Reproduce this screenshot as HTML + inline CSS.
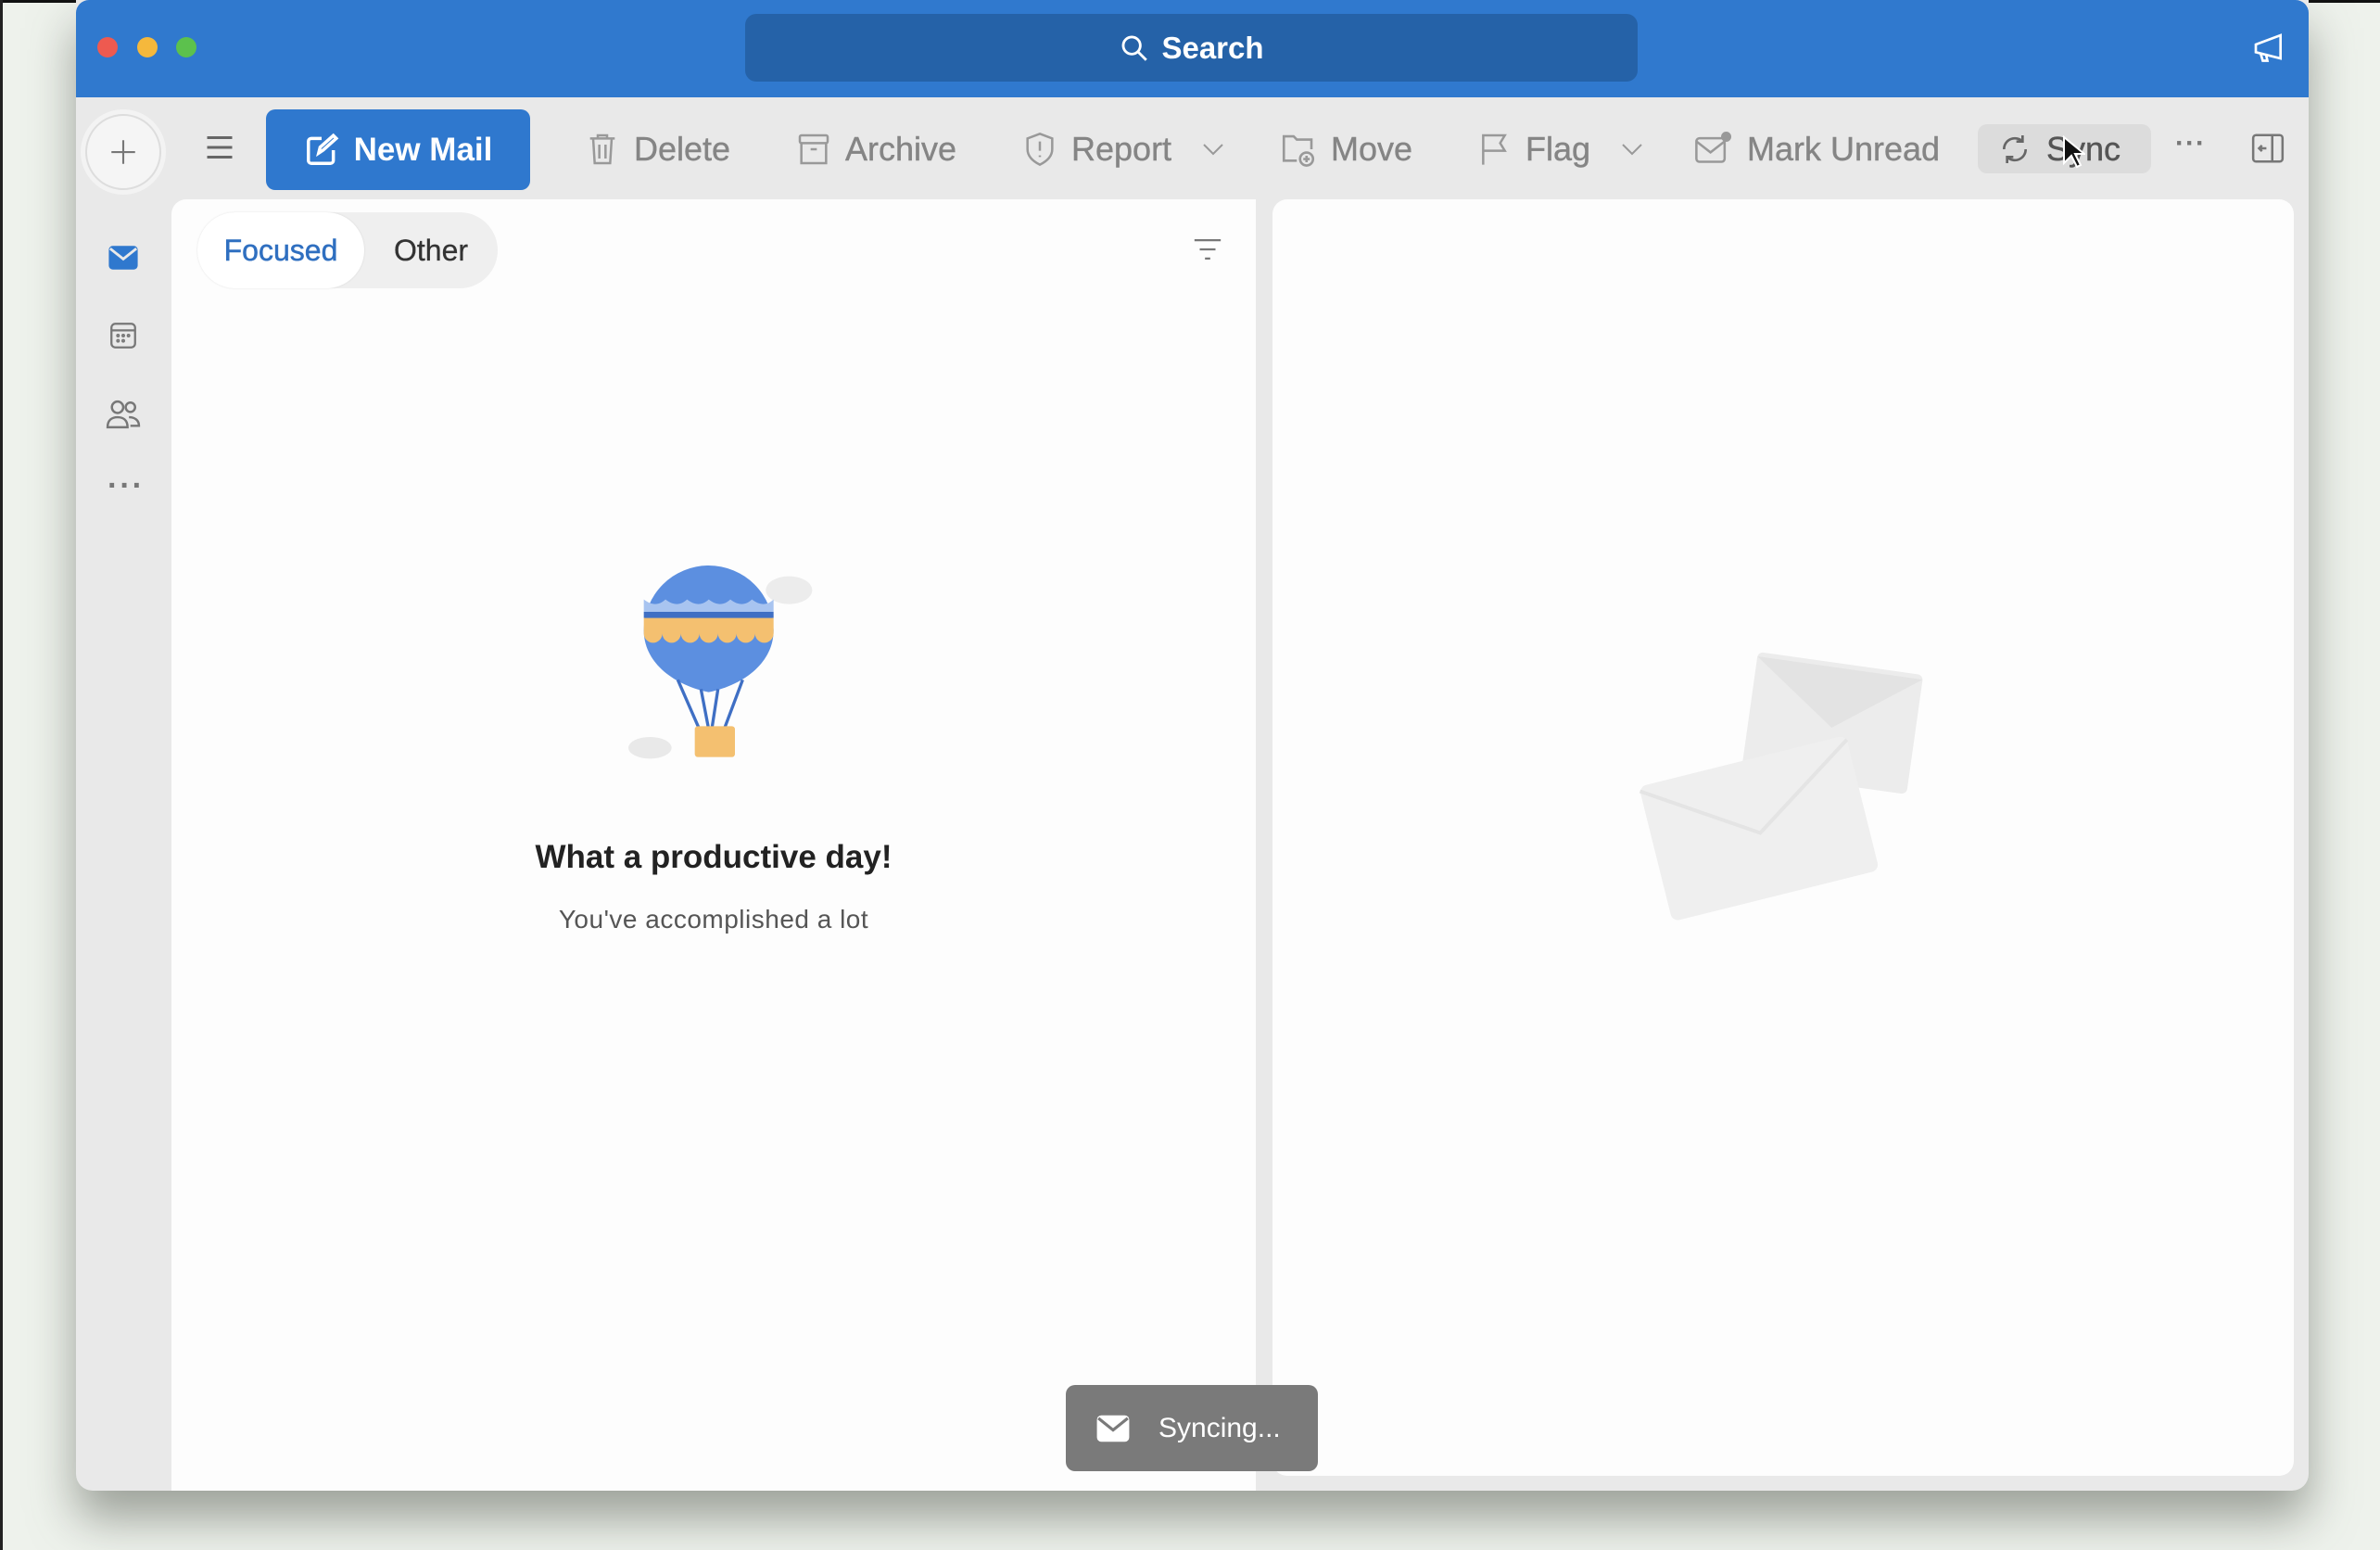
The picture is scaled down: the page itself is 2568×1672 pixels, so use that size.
<!DOCTYPE html>
<html><head><meta charset="utf-8"><style>
*{margin:0;padding:0;box-sizing:border-box}
body{width:2568px;height:1672px;background:#eef2ec;font-family:"Liberation Sans",sans-serif;position:relative;overflow:hidden}
.abs{position:absolute}
#win{left:82px;top:0;width:2409px;height:1608px;background:#e9e9e9;border-radius:0 0 18px 18px;box-shadow:0 30px 50px rgba(90,95,85,.55);overflow:hidden}
#title{left:0;top:0;width:2409px;height:105px;background:#3079ce;border-radius:14px 14px 0 0}
.tl{width:22px;height:22px;border-radius:50%;top:40px}
#search{left:722px;top:15px;width:963px;height:73px;background:#2562a8;border-radius:12px;color:#fff;font-size:33px;font-weight:bold;display:flex;align-items:center;justify-content:center;gap:12px}
.tb{color:#858585;font-size:36px;top:136px;height:50px;display:flex;align-items:center;-webkit-text-stroke:0.4px #858585}
.tb svg{margin-right:14px}
#new{left:205px;top:118px;width:285px;height:87px;background:#2f78ce;border-radius:10px;color:#fff;font-size:35px;font-weight:bold;display:flex;align-items:center;justify-content:center;gap:16px}
#list{left:103px;top:215px;width:1170px;height:1400px;background:#fdfdfd;border-radius:16px 0 0 0}
#read{left:1291px;top:215px;width:1102px;height:1377px;background:#fdfdfd;border-radius:16px}
#pill{left:131px;top:229px;width:324px;height:82px;background:#efefef;border-radius:41px}
#foc{left:131px;top:229px;width:180px;height:82px;background:#fff;border-radius:41px;box-shadow:0 0 2px rgba(0,0,0,.1);color:#2f6fc0;font-size:32px;display:flex;align-items:center;justify-content:center;-webkit-text-stroke:0.5px #2f6fc0}
#oth{left:311px;top:229px;width:144px;height:82px;color:#333;font-size:32px;display:flex;align-items:center;justify-content:center;-webkit-text-stroke:0.3px #333}
#toast{left:1068px;top:1494px;width:272px;height:93px;background:#7a7a7a;border-radius:10px;color:#fff;font-size:30px;display:flex;align-items:center;padding-left:32px;gap:30px}
</style></head><body>
<div class="abs" style="left:0;top:0;width:2568px;height:3px;background:#111"></div>
<div class="abs" style="left:0;top:0;width:3px;height:1672px;background:#222"></div>
<div id="win" class="abs">
 <div id="title" class="abs"></div>
 <div class="abs tl" style="left:23px;background:#ee5a50"></div>
 <div class="abs tl" style="left:66px;background:#f5b83c"></div>
 <div class="abs tl" style="left:108px;background:#5cc14d"></div>
 <div id="search" class="abs"><svg width="34" height="34" viewBox="0 0 24 24" fill="none" stroke="#fff" stroke-width="2"><circle cx="10" cy="10" r="6.5"/><path d="M15 15l6 6"/></svg>Search</div>
 <svg class="abs" style="left:2347px;top:33px" width="40" height="40" viewBox="0 0 24 24" fill="none" stroke="#fff" stroke-width="1.6"><path d="M3 9l16-6v15L3 14z M6 14.5l1.5 5h3l-1-4.5"/></svg>
 <div class="abs" style="left:10px;top:123px;width:82px;height:82px;border-radius:50%;background:#f5f5f5;border:2px solid #ddd;box-shadow:0 0 0 5px #f3f3f3"></div>
 <svg class="abs" style="left:34px;top:147px" width="34" height="34" viewBox="0 0 24 24" stroke="#777" stroke-width="1.5"><path d="M12 3v18M3 12h18"/></svg>
 <svg class="abs" style="left:136px;top:141px" width="38" height="36" viewBox="0 0 24 24" stroke="#666" stroke-width="2"><path d="M3 5h18M3 12h18M3 19h18"/></svg>
 <svg class="abs" style="left:34px;top:262px" width="34" height="32" viewBox="0 0 24 22"><rect x="1" y="2" width="22" height="18" rx="3" fill="#2f78ce"/><path d="M2 4l10 8 10-8" fill="none" stroke="#e9e9e9" stroke-width="2"/></svg>
 <svg class="abs" style="left:34px;top:345px" width="34" height="34" viewBox="0 0 24 24" fill="none" stroke="#777" stroke-width="1.6"><rect x="3" y="3" width="18" height="18" rx="3"/><path d="M3 8h18"/><circle cx="8" cy="12" r=".6"/><circle cx="12" cy="12" r=".6"/><circle cx="16" cy="12" r=".6"/><circle cx="8" cy="16" r=".6"/><circle cx="12" cy="16" r=".6"/></svg>
 <svg class="abs" style="left:31px;top:430px" width="40" height="34" viewBox="0 0 26 22" fill="none" stroke="#777" stroke-width="1.6"><circle cx="9" cy="6" r="4"/><path d="M2 20c0-5 3-7 7-7s7 2 7 7z"/><circle cx="18" cy="6" r="3.3"/><path d="M17 13c4 0 7 2 7 6h-6"/></svg>
 <div class="abs" style="left:34px;top:505px;color:#777;font-size:34px;letter-spacing:2px;font-weight:bold">···</div>
 <div id="new" class="abs"><svg width="38" height="38" viewBox="0 0 24 24" fill="none" stroke="#fff" stroke-width="2.2"><path d="M12 4H5a2 2 0 0 0-2 2v13a2 2 0 0 0 2 2h13a2 2 0 0 0 2-2v-7"/><path d="M10 14l1-4 9-8 2 2-9 8z"/></svg>New Mail</div>
 <div class="abs tb" style="left:548px"><svg width="40" height="40" viewBox="0 0 24 24" fill="none" stroke="#999" stroke-width="1.5"><path d="M4 5h16M9 5V3h6v2M6 5l1 16h10l1-16M10 9v9M14 9v9"/></svg>Delete</div>
 <div class="abs tb" style="left:776px"><svg width="40" height="40" viewBox="0 0 24 24" fill="none" stroke="#999" stroke-width="1.5"><rect x="3" y="3" width="18" height="5" rx="1"/><path d="M4 8v13h16V8M10 12h4"/></svg>Archive</div>
 <div class="abs tb" style="left:1020px"><svg width="40" height="40" viewBox="0 0 24 24" fill="none" stroke="#999" stroke-width="1.5"><path d="M12 2l8 3v7c0 5-4 8-8 10-4-2-8-5-8-10V5z M12 7v6M12 16v1"/></svg>Report<svg style="margin-left:30px" width="30" height="30" viewBox="0 0 24 24" fill="none" stroke="#999" stroke-width="1.6"><path d="M4 8l8 8 8-8"/></svg></div>
 <div class="abs tb" style="left:1298px"><svg width="42" height="42" viewBox="0 0 24 24" fill="none" stroke="#999" stroke-width="1.5"><path d="M11 19H3V4h6l2 2h9v6"/><circle cx="17" cy="18" r="4"/><path d="M15 18h4M17 16v4"/></svg>Move</div>
 <div class="abs tb" style="left:1510px"><svg width="40" height="40" viewBox="0 0 24 24" fill="none" stroke="#999" stroke-width="1.5"><path d="M5 22V3h14l-3 5 3 5H5"/></svg>Flag<svg style="margin-left:30px" width="30" height="30" viewBox="0 0 24 24" fill="none" stroke="#999" stroke-width="1.6"><path d="M4 8l8 8 8-8"/></svg></div>
 <div class="abs tb" style="left:1745px"><svg width="44" height="42" viewBox="0 0 26 24" fill="none" stroke="#999" stroke-width="1.5"><rect x="2" y="5" width="18" height="15" rx="2"/><path d="M2 7l9 7 9-7"/><circle cx="21" cy="4" r="2.5" fill="#999"/></svg>Mark Unread</div>
 <div class="abs" style="left:2052px;top:134px;width:187px;height:53px;background:#dcdcdc;border-radius:10px"></div>
 <div class="abs tb" style="left:2072px;color:#555;-webkit-text-stroke:0.4px #555"><svg width="40" height="42" viewBox="0 0 24 24" fill="none" stroke="#666" stroke-width="1.6"><path d="M19 12a7 7 0 0 1-12 5M5 12a7 7 0 0 1 12-5M17 3v4h-4M7 21v-4h4"/></svg>Sync</div>
 <svg class="abs" style="left:2142px;top:146px" width="26" height="36" viewBox="0 0 12 18"><path d="M1 1v14l4-4 3 6 2-1-3-6h5z" fill="#111" stroke="#fff" stroke-width="1"/></svg>
 <div class="abs" style="left:2265px;top:138px;color:#777;font-size:30px;letter-spacing:1px;font-weight:bold">···</div>
 <svg class="abs" style="left:2346px;top:142px" width="38" height="36" viewBox="0 0 24 22" fill="none" stroke="#777" stroke-width="1.6"><rect x="2" y="2" width="20" height="18" rx="2"/><path d="M15 2v18M11 11H6M8 9l-2 2 2 2"/></svg>
 <div id="list" class="abs"></div>
 <div id="read" class="abs"></div>
 <div id="pill" class="abs"></div>
 <div id="foc" class="abs">Focused</div>
 <div id="oth" class="abs">Other</div>
 <svg class="abs" style="left:1204px;top:254px" width="34" height="30" viewBox="0 0 24 20" stroke="#777" stroke-width="1.6"><path d="M2 3h20M6 10h12M10 17h4"/></svg>
 <svg class="abs" style="left:581px;top:600px" width="220" height="225" viewBox="0 0 130 135">
  <ellipse cx="22" cy="124" rx="14" ry="7" fill="#e9e9e9"/><ellipse cx="112" cy="22" rx="15" ry="9" fill="#ececec"/>
  <path d="M18 48a42 42 0 0 1 84 0c0 20-18 35-42 40-24-5-42-20-42-40z" fill="#5c8fe0"/>
  <path d="M18 28c5 4 10 4 14 0 5 4 10 4 14 0 5 4 10 4 14 0 5 4 10 4 14 0 5 4 10 4 14 0 5 4 10 4 14 0v8H18z" fill="#a8c4f0"/>
  <rect x="18" y="36" width="84" height="4" fill="#3f6fc4"/>
  <path d="M18 40h84v10a6 6 0 0 1-12 0 6 6 0 0 1-12 0 6 6 0 0 1-12 0 6 6 0 0 1-12 0 6 6 0 0 1-12 0 6 6 0 0 1-12 0 6 6 0 0 1-12 0z" fill="#f4c070"/>
  <path d="M40 80l14 32M55 86l5 26M66 86l-4 26M82 80l-12 32" stroke="#3f6fc4" stroke-width="2"/>
  <rect x="51" y="110" width="26" height="20" rx="2" fill="#f4c070"/>
 </svg>
 <div class="abs" style="left:403px;top:905px;width:570px;text-align:center;font-size:35px;font-weight:bold;color:#222">What a productive day!</div>
 <div class="abs" style="left:403px;top:976px;width:570px;text-align:center;font-size:28px;color:#555;letter-spacing:0.5px">You've accomplished a lot</div>
 <svg class="abs" style="left:1680px;top:680px" width="330" height="320" viewBox="0 0 330 320">
  <g transform="rotate(8 215 100)"><rect x="125" y="35" width="180" height="130" rx="6" fill="#ececec"/><path d="M125 40l90 65 90-65" fill="#e3e3e3"/></g>
  <g transform="rotate(-14 130 210)"><rect x="20" y="140" width="230" height="150" rx="8" fill="#efefef"/><path d="M20 145l115 75 115-75" fill="none" stroke="#e4e4e4" stroke-width="4"/></g>
 </svg>
 <div id="toast" class="abs"><svg width="38" height="32" viewBox="0 0 24 20"><rect x="1" y="1" width="22" height="18" rx="3" fill="#fff"/><path d="M2 3l10 8 10-8" fill="none" stroke="#7a7a7a" stroke-width="2"/></svg>Syncing...</div>
</div>
</body></html>
